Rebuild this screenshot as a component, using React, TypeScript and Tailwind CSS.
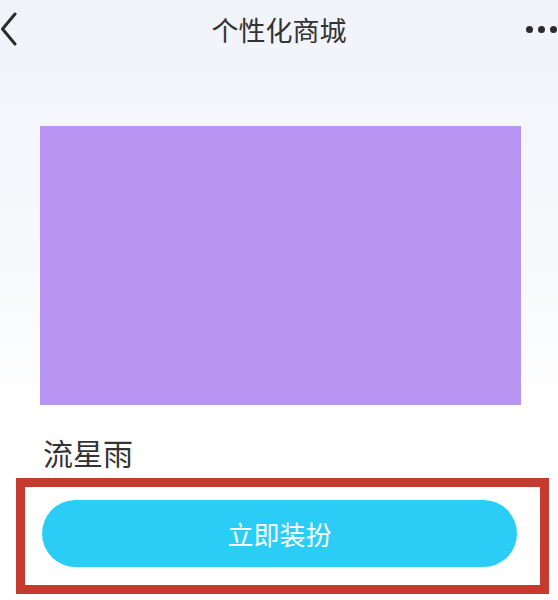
import React from 'react';

const FONT = '"Noto Sans CJK SC", "Noto Sans", sans-serif';

const BackIcon: React.FC = () => (
    <svg width="18" height="34" viewBox="0 0 18 34" fill="none">
        <path d="M15 2 L2.5 17 L15 32" stroke="#2b2b2b" strokeWidth="3" strokeLinecap="round" strokeLinejoin="round" />
    </svg>
);

const MoreIcon: React.FC = () => (
    <div className="flex items-center gap-[5px] pr-px">
        <span className="block w-[7px] h-[7px] rounded-full bg-[#2b2b2b]" />
        <span className="block w-[7px] h-[7px] rounded-full bg-[#2b2b2b]" />
        <span className="block w-[7px] h-[7px] rounded-full bg-[#2b2b2b]" />
    </div>
);

export default function App() {
    return (
        <div
            className="w-[558px] h-[600px] overflow-hidden bg-linear-to-b from-[#f1f3fa] via-[#f8f9fc] via-45% to-white to-70% flex flex-col"
            style={{ fontFamily: FONT }}
        >
            {/* header */}
            <div className="h-[58px] grid grid-cols-[1fr_auto_1fr] items-center">
                <div className="flex items-center">
                    <BackIcon />
                </div>
                <div className="text-[27px] leading-none text-[#333333]">个性化商城</div>
                <div className="flex justify-end">
                    <MoreIcon />
                </div>
            </div>

            {/* preview */}
            <div className="mt-[68px] ml-[40px] w-[481px] h-[279px] bg-[#b894f3]" />

            <div className="mt-[32px] ml-[43px] text-[30px] leading-none text-[#333333]">流星雨</div>

            {/* highlighted action */}
            <div className="mt-[11px] ml-[16px] w-[533px] h-[116px] border-[9px] border-[#c43a2e] bg-white">
                <button className="mt-[13px] ml-[17px] w-[475px] h-[67px] rounded-full bg-[#2bcdf6] text-white text-[26px] leading-none flex items-center justify-center">
                    立即装扮
                </button>
            </div>
        </div>
    );
}
